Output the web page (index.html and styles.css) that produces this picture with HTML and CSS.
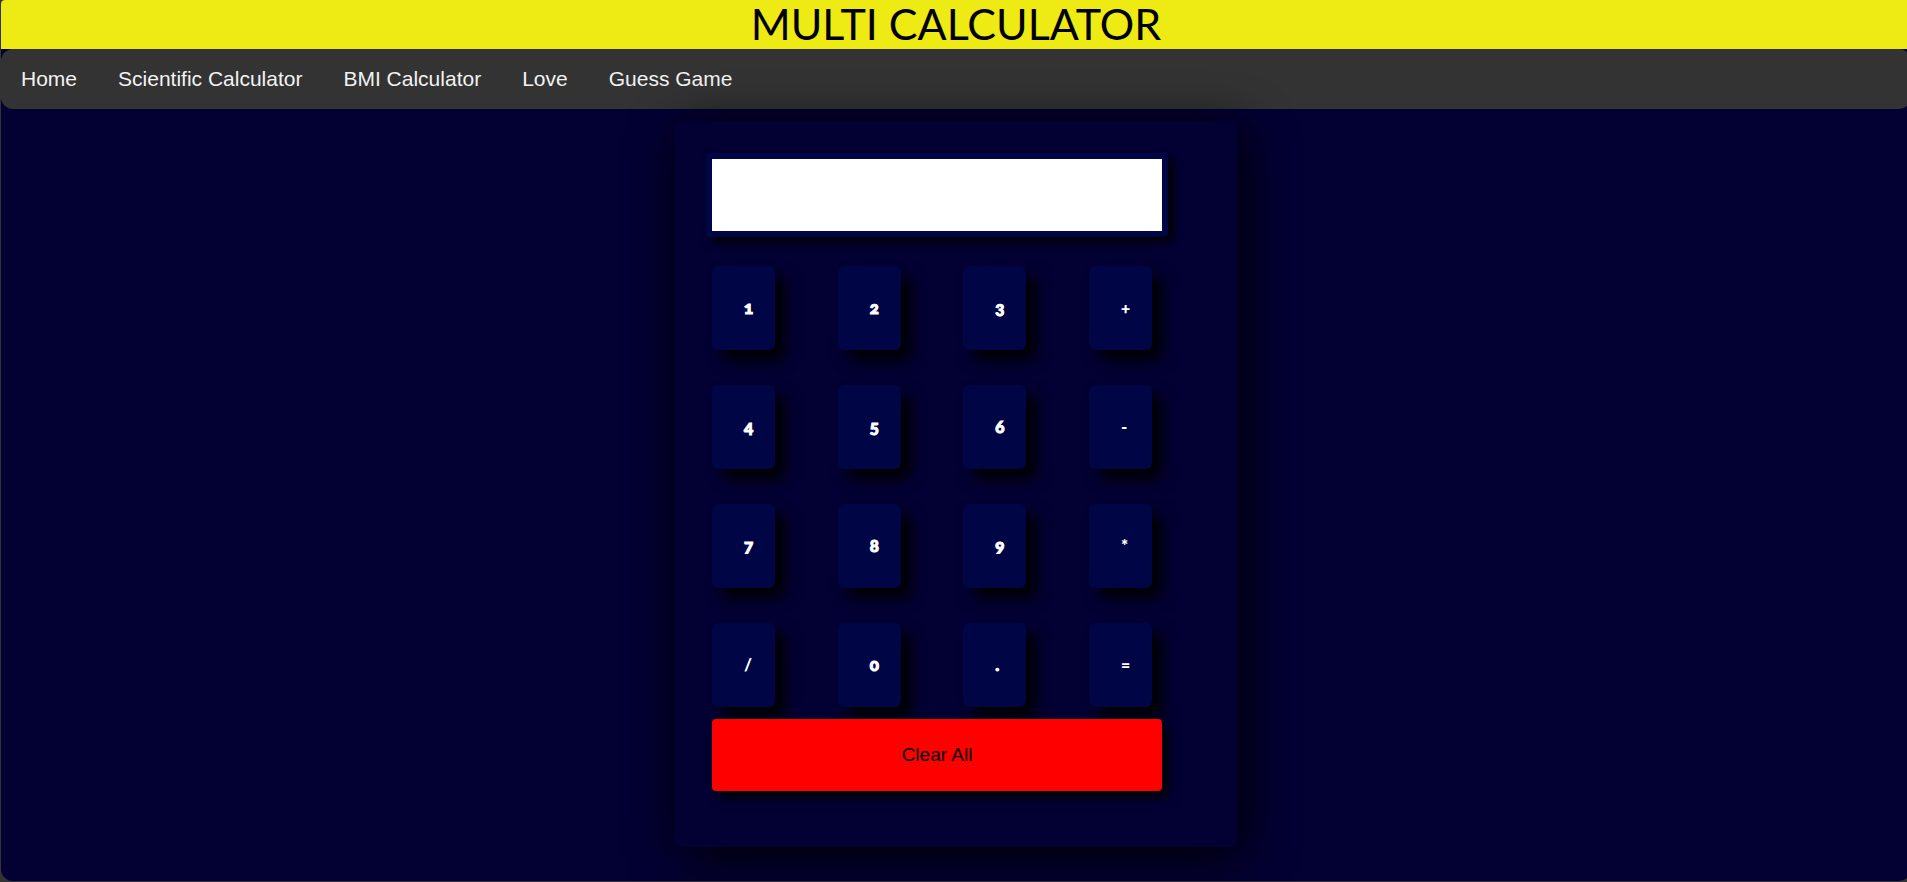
FILE: index.html
```html
<!DOCTYPE html>
<html lang="en">
<head>
<meta charset="utf-8">
<meta name="viewport" content="width=device-width, initial-scale=1">
<title>Multi Calculator</title>
<link rel="stylesheet" href="styles.css">
</head>
<body>
<div class="page">
  <header class="banner"><h1 class="title">MULTI CALCULATOR</h1></header>
  <nav class="nav">
    <a href="#">Home</a>
    <a href="#">Scientific Calculator</a>
    <a href="#">BMI Calculator</a>
    <a href="#">Love</a>
    <a href="#">Guess Game</a>
  </nav>
  <main class="calculator">
    <input class="display" type="text" aria-label="Result">
    <div class="keys">
      <button class="key digit">1</button>
      <button class="key digit">2</button>
      <button class="key digit">3</button>
      <button class="key">+</button>
      <button class="key digit">4</button>
      <button class="key digit">5</button>
      <button class="key digit">6</button>
      <button class="key">-</button>
      <button class="key digit">7</button>
      <button class="key digit">8</button>
      <button class="key digit">9</button>
      <button class="key">*</button>
      <button class="key">/</button>
      <button class="key digit">0</button>
      <button class="key digit">.</button>
      <button class="key">=</button>
    </div>
    <button class="clear">Clear All</button>
  </main>
</div>
</body>
</html>
```
FILE: styles.css
```css
* {
  box-sizing: border-box;
}

html {
  overflow-x: hidden;
}

body {
  margin: 0;
  padding: 0 0 1px 1px;
  background: #333;
  font-family: "Liberation Sans", Arial, sans-serif;
}

.page {
  min-height: calc(100vh - 1px);
  margin-right: -4px;
  padding-bottom: 34px;
  background: #030033;
  border-radius: 4px 4px 12px 12px;
  overflow: hidden;
}

.banner {
  padding-bottom: 2px;
  background: #eeea14;
}

.title {
  margin: 0;
  font: 400 43px/47px "Gill Sans", "Gill Sans MT", Lato, sans-serif;
  text-align: center;
  color: #000;
}

.nav {
  display: flex;
  flex-wrap: wrap;
  gap: 1px;
  background: #333;
  border-radius: 12px;
}

.nav a {
  padding: 0 20px;
  font-size: 21px;
  line-height: 60px;
  color: #f2f2f2;
  text-decoration: none;
}

.calculator {
  position: relative;
  width: 562px;
  max-width: 100%;
  margin: 13px auto 0;
  padding: 31px 69px 56px 31px;
  background: #030033;
  border-radius: 6px;
  box-shadow: 6px 8px 50px #000;
}

.display {
  display: block;
  width: 100%;
  height: 84px;
  padding: 0 12px;
  border: 6px solid #000545;
  border-radius: 4px;
  background: #fff;
  box-shadow: 5px 5px 8px #000;
  font-size: 32px;
}

.keys {
  display: grid;
  grid-template-columns: repeat(4, 63px);
  justify-content: space-between;
  row-gap: 35px;
  margin: 29px 16px 12px 6px;
}

.key {
  height: 84px;
  padding: 0 0 0 32px;
  border: 0;
  border-radius: 6px;
  background: #000545;
  box-shadow: 10px 10px 15px #000;
  font: 900 17px/20px "Gill Sans Ultra Bold", Lato, sans-serif;
  font-variant-numeric: oldstyle-nums;
  text-align: left;
  color: #fff;
}

.digit {
  -webkit-text-stroke: 1px #fff;
}

.clear {
  position: relative;
  display: block;
  width: 450px;
  max-width: 100%;
  height: 72px;
  margin-left: 6px;
  border: 0;
  border-radius: 4px;
  background: #f00;
  box-shadow: 6px 6px 12px #000;
  font: 19px/24px "Liberation Sans", Arial, sans-serif;
  color: #000;
}
```
